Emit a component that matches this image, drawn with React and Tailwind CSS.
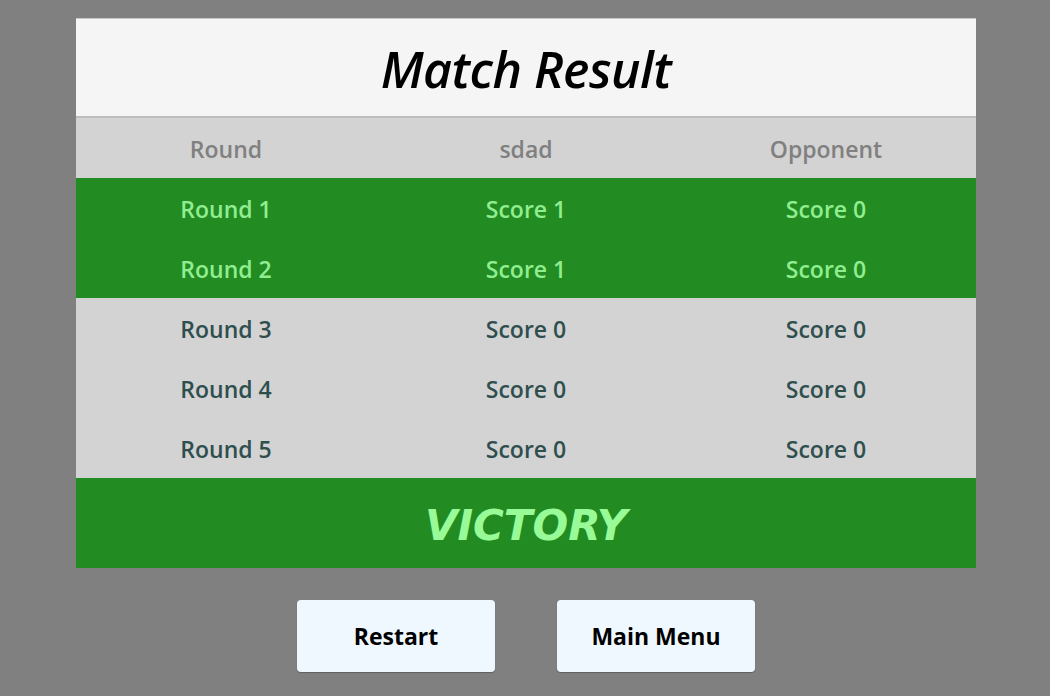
const rounds = [
  { name: 'Round 1', me: 1, opp: 0, won: true },
  { name: 'Round 2', me: 1, opp: 0, won: true },
  { name: 'Round 3', me: 0, opp: 0, won: false },
  { name: 'Round 4', me: 0, opp: 0, won: false },
  { name: 'Round 5', me: 0, opp: 0, won: false },
]

const sans = { fontFamily: '"Open Sans", "Noto Sans", sans-serif' }

function Row({ cells, className }) {
  return (
    <div className={`grid h-[60px] grid-cols-3 items-center pt-[3px] text-center text-[23px] ${className}`}>
      {cells.map((c, i) => (
        <span key={i}>{c}</span>
      ))}
    </div>
  )
}

export default function App() {
  return (
    <div className="flex h-[696px] w-full flex-col items-center bg-[#808080] pt-[18px] pl-[2px]" style={sans}>
      <div className="w-[900px]">
        <div className="flex h-[100px] items-center justify-center border-t border-b-2 border-t-[#c8c8c8] border-b-[#bdbdbd] bg-[#f5f5f5] pt-[3px]">
          <h1 className="text-[50px] font-semibold italic tracking-[-0.5px] text-black">Match Result</h1>
        </div>
        <Row cells={['Round', 'sdad', 'Opponent']} className="bg-[#d3d3d3] font-semibold text-[#808080]" />
        {rounds.map((r) => (
          <Row
            key={r.name}
            cells={[r.name, `Score ${r.me}`, `Score ${r.opp}`]}
            className={
              r.won
                ? 'bg-[#228b22] font-semibold text-[#90ee90]'
                : 'bg-[#d3d3d3] font-semibold text-[#2f4f4f]'
            }
          />
        ))}
        <div className="flex h-[90px] items-center justify-center bg-[#228b22] pt-[5px]">
          <span
            className="text-[42px] font-bold italic text-[#98fb98]"
            style={{ fontFamily: '"DejaVu Sans", Verdana, sans-serif' }}
          >
            VICTORY
          </span>
        </div>
      </div>
      <div className="mt-[32px] flex gap-[62px]">
        {['Restart', 'Main Menu'].map((label) => (
          <button
            key={label}
            className="h-[72px] w-[198px] rounded-[4px] bg-[#f0f8ff] text-[23px] font-bold text-black shadow-[0_1px_1px_rgba(0,0,0,0.25)]"
          >
            {label}
          </button>
        ))}
      </div>
    </div>
  )
}
